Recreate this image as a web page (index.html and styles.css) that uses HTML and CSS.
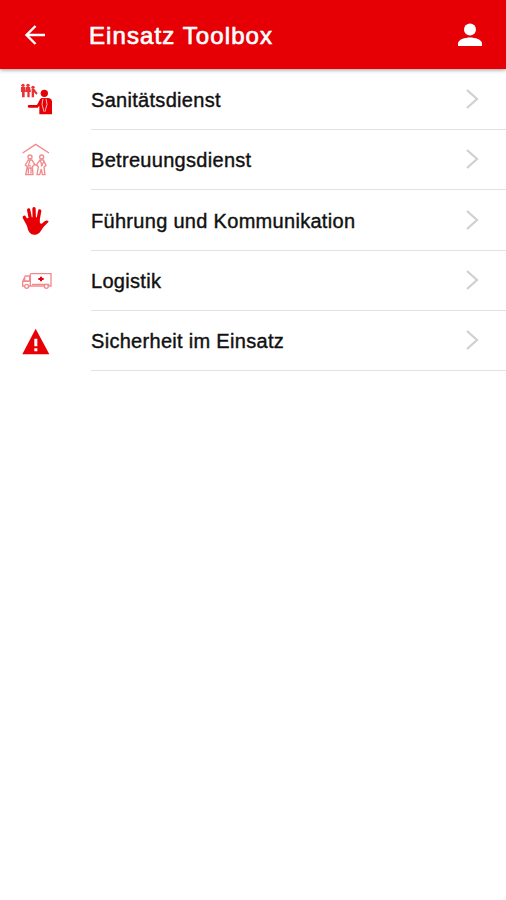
FILE: index.html
```
<!DOCTYPE html>
<html lang="de">
<head>
    <meta charset="UTF-8">
    <meta name="viewport" content="width=device-width, initial-scale=1.0">
    <title>Einsatz Toolbox</title>
    <link rel="stylesheet" href="styles.css">
</head>
<body>
    <header class="toolbar">
        <svg class="back" viewBox="0 0 22 22"><path d="M21 11H2.500M11.500 2l-9 9 9 9"/></svg>
        <h1>Einsatz Toolbox</h1>
        <svg class="user" viewBox="0 0 26 24"><circle cx="13" cy="6.500" r="6"/><path d="M1 23v-2.500C1 16.500 8 14.500 13 14.500s12 2 12 6V23z"/></svg>
    </header>
    <main class="list">
        <div class="row">
            <svg class="icon" viewBox="0 0 150 150">
                <g class="soft">
                    <circle cx="39" cy="31" r="5"/><circle cx="54" cy="31" r="5"/><circle cx="69" cy="37" r="5"/>
                    <path d="M33 36h13l2 15h-4v16h-8V51h-3zM48 36h12l3 15h-4v16h-7V51h-4zM64 42h9l10 13-4 4-7-7v15h-7V45z"/>
                </g>
                <circle cx="103" cy="55" r="11"/>
                <path d="M56 90h25l9-17c2-3 4-4 8-4h15c8 0 13 4 13 11v38H88V92l-5 6H57c-5-1-5-7-1-8z"/>
                <path class="cut" d="M99 71l-3 17 6 22M108 71l3 17-6 22"/>
            </svg>
            <div class="label"><span>Sanitätsdienst</span><svg class="chevron" viewBox="0 0 14 22"><path d="M2 2l10 9-10 9"/></svg></div>
        </div>
        <div class="row">
            <svg class="icon line" viewBox="0 0 150 150">
                <path d="M38 54l39-26 40 26"/>
                <circle cx="60" cy="66" r="6"/><circle cx="95" cy="66" r="6"/>
                <path d="M55 75h11l8 13-7 7 2 24H47l5-24-6-5zM60 76l-5 16 8 1M55 100v16M63 100v16M49 99h20"/>
                <path d="M90 75h10l8 16-6 6 3 22h-8l-3-17-5 17h-8l4-23-5-7zM91 78l6 15M102 79l-9 15M74 88l8 4"/>
            </svg>
            <div class="label"><span>Betreuungsdienst</span><svg class="chevron" viewBox="0 0 14 22"><path d="M2 2l10 9-10 9"/></svg></div>
        </div>
        <div class="row">
            <svg class="icon hand" viewBox="0 0 150 150">
                <path class="fingers" d="M56 88L43 64M63 78l-7-36M73 75l-1-37M83 78l6-33"/>
                <path d="M48 68l12-4h27l3 18 5 1 9-7c5-3 9-3 12 1l-15 15-9 14c-5 8-12 11-20 10-10-1-16-8-19-18z"/>
            </svg>
            <div class="label"><span>Führung und Kommunikation</span><svg class="chevron" viewBox="0 0 14 22"><path d="M2 2l10 9-10 9"/></svg></div>
        </div>
        <div class="row">
            <svg class="icon line truck" viewBox="0 0 150 150">
                <path d="M61 53h62v37h-8M105 90H61V53M61 60H46l-8 16v14h5M53 90h8M44 64v11h15V61M38 76h20M66 85h52"/>
                <circle cx="50" cy="91" r="6"/><circle cx="109" cy="91" r="6"/>
                <path class="cross" d="M90 62h6v4h5v6h-5v4h-6v-4h-5v-6h5z"/>
            </svg>
            <div class="label"><span>Logistik</span><svg class="chevron" viewBox="0 0 14 22"><path d="M2 2l10 9-10 9"/></svg></div>
        </div>
        <div class="row">
            <svg class="icon warning" viewBox="0 0 150 150">
                <path d="M77 35l41 77H37z"/>
                <path class="mark" d="M73 65h9v23h-9zM73 94h9v9h-9z"/>
            </svg>
            <div class="label"><span>Sicherheit im Einsatz</span><svg class="chevron" viewBox="0 0 14 22"><path d="M2 2l10 9-10 9"/></svg></div>
        </div>
    </main>
</body>
</html>
```
FILE: styles.css
```
body {
    margin: 0;
    min-height: 100vh;
    background-color: #fff;
    color: #111;
    font-family: "Liberation Sans", Arial, sans-serif;
}
.toolbar {
    display: flex;
    align-items: center;
    box-sizing: border-box;
    height: 69px;
    padding: 1px 23px 0 24px;
    background-color: #e60005;
    color: #fff;
    box-shadow: 0 1px 4px rgba(0,0,0,0.4);
}
.toolbar h1 {
    flex: 1;
    margin: 1px 0 0 43px;
    font-size: 24px;
    font-weight: normal;
    letter-spacing: 1.1px;
    -webkit-text-stroke: 0.7px #fff;
}
.back {
    width: 22px;
    height: 22px;
    fill: none;
    stroke: #fff;
    stroke-width: 2.4;
}
.user {
    width: 26px;
    height: 24px;
    fill: #fff;
}
.row {
    display: flex;
    height: 60.3px;
    padding-left: 10px;
}
.icon {
    width: 50px;
    height: 50px;
    margin: 6px 31px 0 0;
    fill: #e60005;
}
.icon .soft {
    opacity: 0.8;
}
.icon .cut {
    fill: none;
    stroke: #fbb;
    stroke-width: 3;
}
.icon .mark {
    fill: #fff;
}
.warning {
    margin-top: 7px;
}
.line {
    fill: none;
    stroke: #f28a8d;
    stroke-width: 4;
}
.line .cross {
    fill: #e60005;
    stroke: none;
}
.hand .fingers {
    fill: none;
    stroke: #e60005;
    stroke-width: 10;
    stroke-linecap: round;
}
.label {
    flex: 1;
    display: flex;
    align-items: center;
    justify-content: space-between;
    box-sizing: border-box;
    height: 61px;
    padding: 3px 27px 0 0;
    border-bottom: 1px solid #e2e2e2;
    font-size: 20px;
    letter-spacing: 0.3px;
    -webkit-text-stroke: 0.4px #111;
}
.chevron {
    width: 14px;
    height: 22px;
    margin-top: -3px;
    fill: none;
    stroke: #d0d0d0;
    stroke-width: 2.2;
}
```
